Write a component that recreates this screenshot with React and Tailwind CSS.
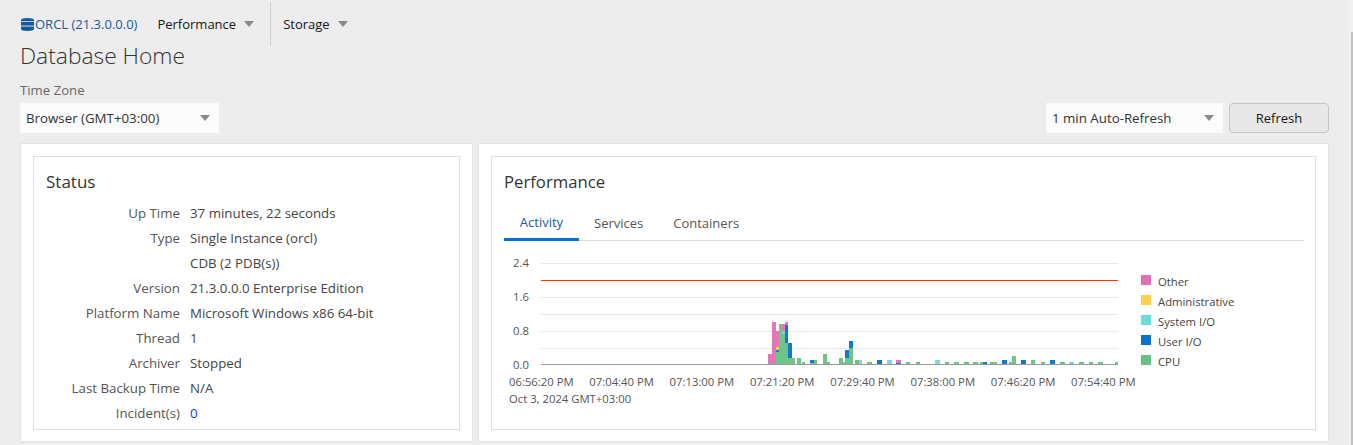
import React from 'react';

const statusRows = [
  ['Up Time', '37 minutes, 22 seconds'],
  ['Type', 'Single Instance (orcl)'],
  ['', 'CDB (2 PDB(s))'],
  ['Version', '21.3.0.0.0 Enterprise Edition'],
  ['Platform Name', 'Microsoft Windows x86 64-bit'],
  ['Thread', '1'],
  ['Archiver', 'Stopped'],
  ['Last Backup Time', 'N/A'],
  ['Incident(s)', '0'],
];

const legend = [
  ['Other', 'bg-[#e371b2]'],
  ['Administrative', 'bg-[#fccf4d]'],
  ['System I/O', 'bg-[#6ddbdb]'],
  ['User I/O', 'bg-[#0572ce]'],
  ['CPU', 'bg-[#68c182]'],
];

const times = ['06:56:20 PM', '07:04:40 PM', '07:13:00 PM', '07:21:20 PM', '07:29:40 PM', '07:38:00 PM', '07:46:20 PM', '07:54:40 PM'];

const PINK = '#e371b2';
const YEL = '#fccf4d';
const CY = '#6ddbdb';
const BL = '#0572ce';
const GR = '#68c182';

// x, width, then stacked segments from the baseline: [colour, height]
const bars = [
  [768, 4, [[PINK, 10]]],
  [772, 4, [[PINK, 42]]],
  [776, 3, [[GR, 12], [BL, 2], [YEL, 3], [PINK, 16]]],
  [779, 3, [[GR, 40]]],
  [782, 3, [[GR, 30], [CY, 3], [PINK, 7]]],
  [785, 3, [[GR, 21], [BL, 18], [PINK, 3]]],
  [788, 4, [[GR, 6], [BL, 15]]],
  [792, 3, [[GR, 6]]],
  [797, 4, [[GR, 6]]],
  [802, 3, [[GR, 2]]],
  [810, 4, [[GR, 1], [BL, 3]]],
  [814, 3, [[GR, 4]]],
  [823, 4, [[GR, 10]]],
  [827, 3, [[GR, 2]]],
  [839, 4, [[GR, 6]]],
  [843, 3, [[GR, 2]]],
  [845, 4, [[GR, 6], [BL, 8]]],
  [849, 4, [[GR, 16], [BL, 7]]],
  [855, 4, [[GR, 4]]],
  [859, 3, [[CY, 4]]],
  [867, 5, [[GR, 2]]],
  [877, 5, [[BL, 4]]],
  [887, 5, [[CY, 4]]],
  [896, 5, [[BL, 1], [PINK, 3]]],
  [906, 4, [[GR, 2]]],
  [916, 4, [[GR, 2]]],
  [935, 5, [[CY, 4]]],
  [945, 4, [[GR, 2]]],
  [954, 5, [[GR, 2]]],
  [964, 5, [[GR, 2]]],
  [973, 5, [[GR, 2]]],
  [980, 3, [[GR, 2]]],
  [983, 4, [[BL, 2]]],
  [990, 7, [[GR, 2]]],
  [1002, 5, [[BL, 4]]],
  [1009, 3, [[GR, 2]]],
  [1012, 4, [[GR, 8]]],
  [1021, 5, [[BL, 4]]],
  [1031, 4, [[GR, 4]]],
  [1041, 4, [[GR, 2]]],
  [1050, 5, [[BL, 4]]],
  [1060, 5, [[GR, 2]]],
  [1069, 5, [[CY, 2]]],
  [1079, 5, [[GR, 2]]],
  [1089, 4, [[GR, 2]]],
  [1098, 5, [[GR, 2]]],
  [1115, 3, [[GR, 2]]],
];

const Caret = () => (
  <svg width="10" height="6" viewBox="0 0 10 6" className="shrink-0">
    <path d="M0 0h10L5 6z" fill="#8a8a8a" />
  </svg>
);

const DbIcon = () => (
  <svg width="13" height="13" viewBox="0 0 13 13" className="ml-px shrink-0">
    <path d="M0 2C0 .8 2.5 0 6.5 0S13 .8 13 2v1.2H0z" fill="#145c9e" />
    <rect x="0" y="4" width="13" height="3.6" fill="#145c9e" />
    <path d="M0 8.400h13V11c0 1.200-2.500 2-6.500 2S0 12.200 0 11z" fill="#145c9e" />
  </svg>
);

const ActivityChart = () => {
  const gridY = [263, 297, 314, 331, 348];
  return (
    <svg width="577" height="103" viewBox="541 262 577 103" className="block shrink-0">
      {gridY.map((y) => (
        <rect key={y} x="541" y={y} width="577" height="1" fill="#e6e6ec" />
      ))}
      <line x1="541" x2="1118" y1="280.500" y2="280.500" stroke="#ff3300" strokeWidth="1" />
      {bars.map(([x, w, segs]) => {
        let top = 364;
        return (
          <g key={x} opacity="0.95">
            {segs.map(([color, h], i) => {
              top -= h;
              return <rect key={i} x={x} y={top} width={w} height={h} fill={color} />;
            })}
          </g>
        );
      })}
      <rect x="541" y="364" width="577" height="1" fill="#9a9a9a" />
    </svg>
  );
};

const App = () => {
  return (
    <div className="relative h-[445px] overflow-hidden bg-[#ededed] pl-5 pr-6 text-[13px] leading-none text-[#333] font-['Open_Sans',sans-serif]">
      {/* nav */}
      <div className="flex h-12 items-center">
        <DbIcon />
        <a className="ml-px text-[#145c9e]">ORCL (21.3.0.0.0)</a>
        <div className="ml-5 flex items-center gap-2 text-[#161513]">
          <span>Performance</span>
          <Caret />
        </div>
        <div className="ml-4 h-[44px] w-px bg-[#d0d0d0]" />
        <div className="ml-3 flex items-center gap-2 text-[#161513]">
          <span>Storage</span>
          <Caret />
        </div>
      </div>

      <h1 className="mt-[-4px] text-[22.8px] font-light leading-[24px] text-[#333]">Database Home</h1>

      <div className="mt-4 text-[13.2px] text-[#666]">Time Zone</div>

      <div className="mt-1.5 flex h-[30px] items-stretch justify-between text-[13.3px]">
        <div className="flex w-[199px] items-center justify-between bg-[#fbfbfb] pl-1.5 pr-[9px] text-[#333]">
          <span>Browser (GMT+03:00)</span>
          <Caret />
        </div>
        <div className="flex gap-1.5">
          <div className="flex w-[177px] items-center justify-between bg-[#fbfbfb] pl-1.5 pr-[9px] text-[#333]">
            <span>1 min Auto-Refresh</span>
            <Caret />
          </div>
          <button className="w-[100px] rounded-sm border border-[#c4c4c4] bg-[#e8e8e8] text-[13px] text-[#161513]">Refresh</button>
        </div>
      </div>

      <div className="mt-2.5 flex gap-[5px]">
        {/* status */}
        <div className="h-[299px] w-[453px] border border-[#e3e3e3] bg-white p-3">
          <div className="h-[274px] border border-[#dfdfdf] px-3 pt-[15px]">
            <h2 className="text-[17px] leading-5 text-[#333]">Status</h2>
            <div className="mt-[9px]">
              {statusRows.map(([label, value], i) => (
                <div key={i} className="flex h-[25px] items-center text-[13.3px]">
                  <span className="w-[134px] text-right text-[#555]">{label}</span>
                  <span className={`ml-2.5 ${label === 'Incident(s)' ? 'text-[#0a3de0]' : 'text-[#444]'}`}>{value}</span>
                </div>
              ))}
            </div>
          </div>
        </div>

        {/* performance */}
        <div className="h-[299px] w-[851px] border border-[#e3e3e3] bg-white p-3">
          <div className="h-[274px] border border-[#dfdfdf] px-3 pt-[15px]">
            <h2 className="text-[16.7px] leading-5 text-[#333]">Performance</h2>
            <div className="mt-[15px] flex h-[34px] w-[800px] border-b border-[#dcdcdc]">
              <div className="flex h-[34px] w-[75px] items-center justify-center border-b-[3px] border-[#0572ce] text-[#145c9e]">Activity</div>
              <div className="flex h-[33px] items-center pl-[15px] text-[#555]">Services</div>
              <div className="flex h-[33px] items-center pl-[30px] text-[#555]">Containers</div>
            </div>

            <div className="mt-[21px] flex">
              <div className="flex w-[37px] shrink-0 flex-col items-end pr-[12px] text-[11.3px] text-[#555]">
                {['2.4', '1.6', '0.8', '0.0'].map((v) => (
                  <span key={v} className="flex h-[34px] items-start leading-3 -mt-[5px] mb-[5px]">{v}</span>
                ))}
              </div>
              <div className="w-[637px] shrink-0">
                <ActivityChart />
                <div className="ml-[-32px] mt-[11px] flex w-[640px] text-[11.3px] text-[#555]">
                  {times.map((t) => (
                    <span key={t} className="w-[80.3px] shrink-0 whitespace-nowrap">{t}</span>
                  ))}
                </div>
                <div className="ml-[-32px] mt-[5px] text-[11.3px] text-[#555]">Oct 3, 2024 GMT+03:00</div>
              </div>
              <div className="ml-[-37px] flex flex-col gap-[10px] pt-[13px] text-[11.3px] text-[#444]">
                {legend.map(([name, color]) => (
                  <div key={name} className="flex h-[10px] items-center gap-[7px]">
                    <span className={`h-2.5 w-2.5 ${color}`} />
                    <span className="relative top-px">{name}</span>
                  </div>
                ))}
              </div>
            </div>
          </div>
        </div>
      </div>

      {/* browser scrollbar */}
      <div className="absolute right-0 top-0 h-full w-1 bg-[#f0f0f0]" />
      <div className="absolute right-0 top-8 h-[413px] w-[2px] bg-[#c2c2c2]" />
    </div>
  );
};

export default App;
